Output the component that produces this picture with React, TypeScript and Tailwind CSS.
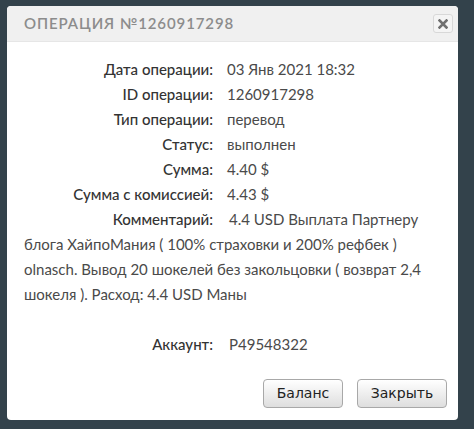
import React from "react";

const rows: [string, string][] = [
  ["Дата операции:", "03 Янв 2021 18:32"],
  ["ID операции:", "1260917298"],
  ["Тип операции:", "перевод"],
  ["Статус:", "выполнен"],
  ["Сумма:", "4.40 $"],
  ["Сумма с комиссией:", "4.43 $"],
];

export default function App() {
  return (
    <div className="h-[429px] w-[474px] bg-[#33424b] pl-[7px] pt-[6px]" style={{ fontFamily: "Lato, 'Noto Sans', sans-serif" }}>
      <div className="w-[451px] h-[414px] bg-white rounded-[4px] flex flex-col overflow-hidden">
        <div className="h-[36px] bg-[#f0f0f0] border-b border-[#e6e6e6] flex items-center pl-[17px] pr-[5px]">
          <div className="flex-1 text-[15px] font-semibold tracking-[0.9px] text-[#8c8c8c] uppercase">Операция №1260917298</div>
          <div className="w-[20px] h-[19px] border border-[#d8d8d8] rounded-[3px] bg-[#f4f4f4] flex items-center justify-center">
            <svg width="10" height="10" viewBox="0 0 10 10">
              <path d="M1.5 1.5 L8.5 8.5 M8.5 1.5 L1.5 8.5" stroke="#6f6f6f" strokeWidth="2.6" strokeLinecap="square" />
            </svg>
          </div>
        </div>
        <div className="pt-[15px] pl-[17px] pr-[8px] text-[15px] leading-[25px] text-[#4a4a4a] flex-1">
          {rows.map(([l, v]) => (
            <div key={l} className="flex">
              <div className="w-[189px] text-right text-[#333] font-medium">{l}</div>
              <div className="pl-[14px]">{v}</div>
            </div>
          ))}
          <div className="flex">
            <div className="w-[189px] text-right text-[#333] font-medium">Комментарий:</div>
            <div className="pl-[16px]">4.4 USD Выплата Партнеру</div>
          </div>
          <div>блога ХайпоМания ( 100% страховки и 200% рефбек ) olnasch. Вывод 20 шокелей без закольцовки ( возврат 2,4 шокеля ). Расход: 4.4 USD Маны</div>
          <div className="flex mt-[25px]">
            <div className="w-[189px] text-right text-[#333] font-medium">Аккаунт:</div>
            <div className="pl-[16px]">P49548322</div>
          </div>
        </div>
        <div className="flex justify-end gap-[14px] pr-[11px] pb-[12px]" style={{ fontFamily: "'DejaVu Sans', sans-serif" }}>
          <button className="w-[80px] h-[29px] border border-[#a8a8a8] rounded-[4px] bg-gradient-to-b from-[#ffffff] to-[#dedede] text-[14px] text-[#222]">Баланс</button>
          <button className="w-[90px] h-[29px] border border-[#a8a8a8] rounded-[4px] bg-gradient-to-b from-[#ffffff] to-[#dedede] text-[14px] text-[#222]">Закрыть</button>
        </div>
      </div>
    </div>
  );
}
